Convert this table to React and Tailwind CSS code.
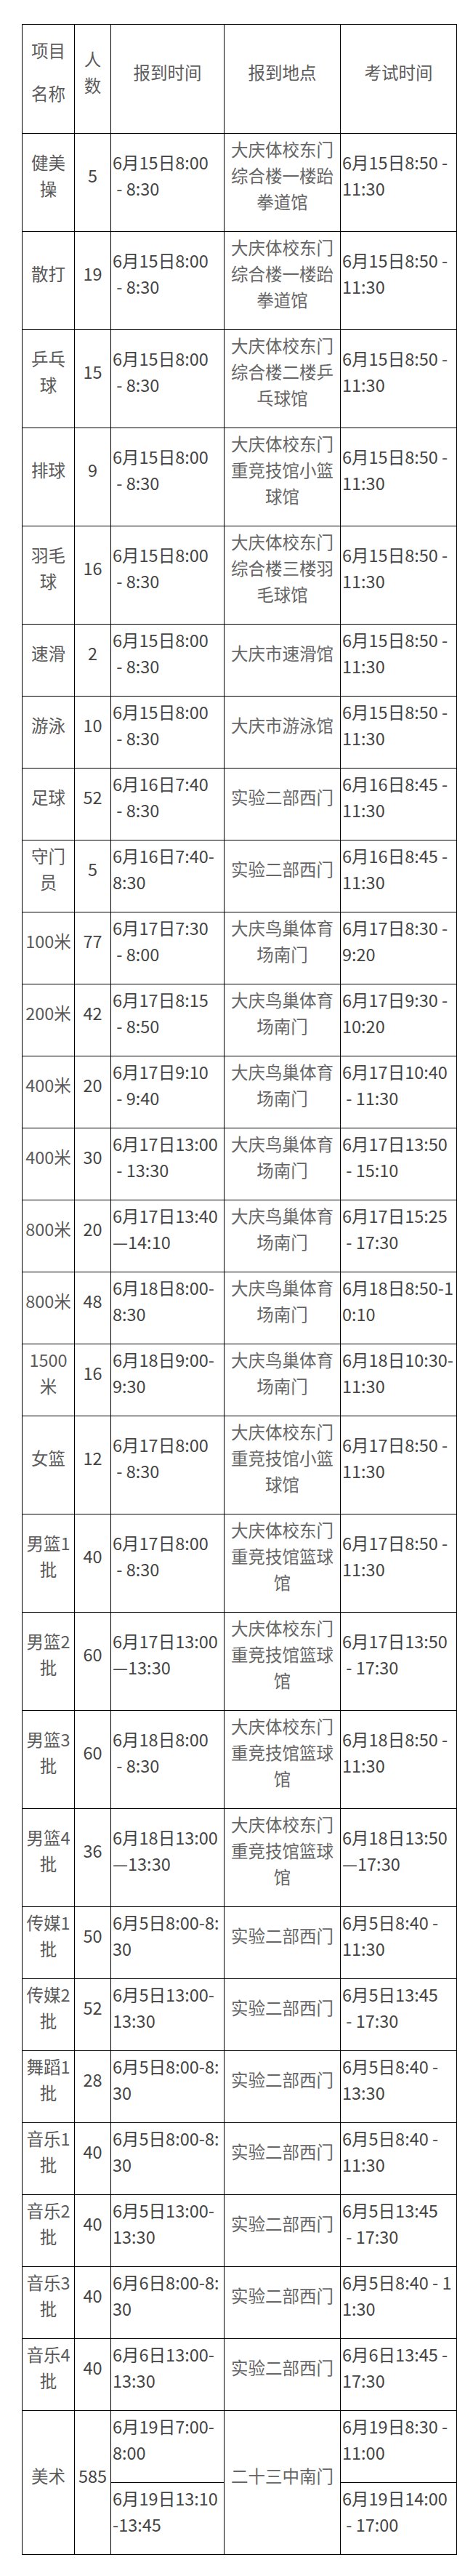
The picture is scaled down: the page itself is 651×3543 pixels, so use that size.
import React from "react";

const QIAO = ["大庆鸟巢体育", "场南门"];
const SHIYAN = ["实验二部西门"];
const LANQIU = ["大庆体校东门", "重竞技馆篮球", "馆"];

const rows = [
  { name: ["健美", "操"], count: "5", check: ["6月15日8:00", " - 8:30"], place: ["大庆体校东门", "综合楼一楼跆", "拳道馆"], exam: ["6月15日8:50 -", "11:30"] },
  { name: ["散打"], count: "19", check: ["6月15日8:00", " - 8:30"], place: ["大庆体校东门", "综合楼一楼跆", "拳道馆"], exam: ["6月15日8:50 -", "11:30"] },
  { name: ["乒乓", "球"], count: "15", check: ["6月15日8:00", " - 8:30"], place: ["大庆体校东门", "综合楼二楼乒", "乓球馆"], exam: ["6月15日8:50 -", "11:30"] },
  { name: ["排球"], count: "9", check: ["6月15日8:00", " - 8:30"], place: ["大庆体校东门", "重竞技馆小篮", "球馆"], exam: ["6月15日8:50 -", "11:30"] },
  { name: ["羽毛", "球"], count: "16", check: ["6月15日8:00", " - 8:30"], place: ["大庆体校东门", "综合楼三楼羽", "毛球馆"], exam: ["6月15日8:50 -", "11:30"] },
  { name: ["速滑"], count: "2", check: ["6月15日8:00", " - 8:30"], place: ["大庆市速滑馆"], exam: ["6月15日8:50 -", "11:30"] },
  { name: ["游泳"], count: "10", check: ["6月15日8:00", " - 8:30"], place: ["大庆市游泳馆"], exam: ["6月15日8:50 -", "11:30"] },
  { name: ["足球"], count: "52", check: ["6月16日7:40", " - 8:30"], place: SHIYAN, exam: ["6月16日8:45 -", "11:30"] },
  { name: ["守门", "员"], count: "5", check: ["6月16日7:40-", "8:30"], place: SHIYAN, exam: ["6月16日8:45 -", "11:30"] },
  { name: ["100米"], count: "77", check: ["6月17日7:30", " - 8:00"], place: QIAO, exam: ["6月17日8:30 -", "9:20"] },
  { name: ["200米"], count: "42", check: ["6月17日8:15", " - 8:50"], place: QIAO, exam: ["6月17日9:30 -", "10:20"] },
  { name: ["400米"], count: "20", check: ["6月17日9:10", " - 9:40"], place: QIAO, exam: ["6月17日10:40", " - 11:30"] },
  { name: ["400米"], count: "30", check: ["6月17日13:00", " - 13:30"], place: QIAO, exam: ["6月17日13:50", " - 15:10"] },
  { name: ["800米"], count: "20", check: ["6月17日13:40", "—14:10"], place: QIAO, exam: ["6月17日15:25", " - 17:30"] },
  { name: ["800米"], count: "48", check: ["6月18日8:00-", "8:30"], place: QIAO, exam: ["6月18日8:50-1", "0:10"] },
  { name: ["1500", "米"], count: "16", check: ["6月18日9:00-", "9:30"], place: QIAO, exam: ["6月18日10:30-", "11:30"] },
  { name: ["女篮"], count: "12", check: ["6月17日8:00", " - 8:30"], place: ["大庆体校东门", "重竞技馆小篮", "球馆"], exam: ["6月17日8:50 -", "11:30"] },
  { name: ["男篮1", "批"], count: "40", check: ["6月17日8:00", " - 8:30"], place: LANQIU, exam: ["6月17日8:50 -", "11:30"] },
  { name: ["男篮2", "批"], count: "60", check: ["6月17日13:00", "—13:30"], place: LANQIU, exam: ["6月17日13:50", " - 17:30"] },
  { name: ["男篮3", "批"], count: "60", check: ["6月18日8:00", " - 8:30"], place: LANQIU, exam: ["6月18日8:50 -", "11:30"] },
  { name: ["男篮4", "批"], count: "36", check: ["6月18日13:00", "—13:30"], place: LANQIU, exam: ["6月18日13:50", "—17:30"] },
  { name: ["传媒1", "批"], count: "50", check: ["6月5日8:00-8:", "30"], place: SHIYAN, exam: ["6月5日8:40 -", "11:30"] },
  { name: ["传媒2", "批"], count: "52", check: ["6月5日13:00-", "13:30"], place: SHIYAN, exam: ["6月5日13:45", " - 17:30"] },
  { name: ["舞蹈1", "批"], count: "28", check: ["6月5日8:00-8:", "30"], place: SHIYAN, exam: ["6月5日8:40 -", "13:30"] },
  { name: ["音乐1", "批"], count: "40", check: ["6月5日8:00-8:", "30"], place: SHIYAN, exam: ["6月5日8:40 -", "11:30"] },
  { name: ["音乐2", "批"], count: "40", check: ["6月5日13:00-", "13:30"], place: SHIYAN, exam: ["6月5日13:45", " - 17:30"] },
  { name: ["音乐3", "批"], count: "40", check: ["6月6日8:00-8:", "30"], place: SHIYAN, exam: ["6月5日8:40 - 1", "1:30"] },
  { name: ["音乐4", "批"], count: "40", check: ["6月6日13:00-", "13:30"], place: SHIYAN, exam: ["6月6日13:45 -", "17:30"] },
];

// 单元格统一样式：上 3px 下 23px，行高 36px
const cell = "border border-black align-middle px-[2px] pt-[3px] pb-[23px] leading-[36px]";

function Lines({ lines }) {
  return lines.map((l, i) => (
    <div key={i} className="whitespace-pre">{l}</div>
  ));
}

export default function App() {
  return (
    <div className="bg-white pt-[33px] pb-[30px] pl-[30px] font-['Noto_Sans_CJK_SC',sans-serif] text-[23.5px]">
      <table className="border-collapse table-fixed w-[598px]">
        <colgroup>
          <col className="w-[72px]" />
          <col className="w-[50px]" />
          <col className="w-[156px]" />
          <col className="w-[160px]" />
          <col className="w-[160px]" />
        </colgroup>
        <thead>
          <tr className="text-[#5c5c5c] font-normal">
            <th className={`${cell} font-normal text-center`}>
              <div className="h-[123px] flex flex-col justify-center gap-[23px]">
                <div>项目</div>
                <div>名称</div>
              </div>
            </th>
            <th className={`${cell} font-normal text-center`}>
              <Lines lines={["人", "数"]} />
            </th>
            <th className={`${cell} font-normal text-center`}>报到时间</th>
            <th className={`${cell} font-normal text-center`}>报到地点</th>
            <th className={`${cell} font-normal text-center`}>考试时间</th>
          </tr>
        </thead>
        <tbody>
          {rows.map((r, i) => (
            <tr key={i}>
              <td className={`${cell} text-center text-[#5a5a5a]`}><Lines lines={r.name} /></td>
              <td className={`${cell} text-center text-[#444]`}>{r.count}</td>
              <td className={`${cell} text-left text-[#444]`}><Lines lines={r.check} /></td>
              <td className={`${cell} text-center text-[#666]`}><Lines lines={r.place} /></td>
              <td className={`${cell} text-left text-[#444]`}><Lines lines={r.exam} /></td>
            </tr>
          ))}
          {/* 美术分上下午两场 */}
          <tr>
            <td rowSpan={2} className={`${cell} text-center text-[#5a5a5a]`}>美术</td>
            <td rowSpan={2} className={`${cell} text-center text-[#444]`}>585</td>
            <td className={`${cell} text-left text-[#444]`}><Lines lines={["6月19日7:00-", "8:00"]} /></td>
            <td rowSpan={2} className={`${cell} text-center text-[#666]`}>二十三中南门</td>
            <td className={`${cell} text-left text-[#444]`}><Lines lines={["6月19日8:30 -", "11:00"]} /></td>
          </tr>
          <tr>
            <td className={`${cell} text-left text-[#444]`}><Lines lines={["6月19日13:10", "-13:45"]} /></td>
            <td className={`${cell} text-left text-[#444]`}><Lines lines={["6月19日14:00", " - 17:00"]} /></td>
          </tr>
        </tbody>
      </table>
    </div>
  );
}
